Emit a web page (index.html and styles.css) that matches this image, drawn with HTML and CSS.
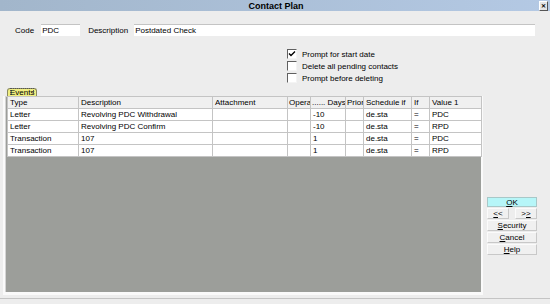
FILE: index.html
```html
<!DOCTYPE html>
<html lang="en">
<head>
    <meta charset="UTF-8">
    <title>Contact Plan</title>
    <link rel="stylesheet" href="styles.css">
</head>
<body>
    <div class="window">
        <div class="titlebar">
            <span class="title">Contact Plan</span>
            <span class="close-btn">&#x2715;</span>
        </div>

        <div class="fields">
            <label class="lbl-code">Code</label>
            <input class="input-code" type="text" value="PDC" readonly>
            <label class="lbl-desc">Description</label>
            <input class="input-desc" type="text" value="Postdated Check" readonly>
        </div>

        <div class="checks">
            <div class="check-row">
                <span class="box">
                    <svg width="8" height="8" viewBox="0 0 8 8"><path d="M1 3.5 L3 5.5 L7 1.5" fill="none" stroke="#000" stroke-width="1.4"/></svg>
                </span>
                Prompt for start date
            </div>
            <div class="check-row"><span class="box"></span>Delete all pending contacts</div>
            <div class="check-row"><span class="box"></span>Prompt before deleting</div>
        </div>

        <div class="tabs">
            <span class="tab"><span class="tab-label">Events</span></span>
        </div>

        <div class="main">
            <div class="grid-frame">
                <table class="events">
                    <thead>
                        <tr>
                            <th class="c-type">Type</th>
                            <th class="c-desc">Description</th>
                            <th class="c-att">Attachment</th>
                            <th class="c-op">Opera</th>
                            <th class="c-days">...... Days</th>
                            <th class="c-prior">Prior</th>
                            <th class="c-sched">Schedule if</th>
                            <th class="c-if">If</th>
                            <th class="c-val">Value 1</th>
                        </tr>
                    </thead>
                    <tbody>
                        <tr>
                            <td>Letter</td><td>Revolving PDC Withdrawal</td><td></td><td></td>
                            <td>-10</td><td></td><td>de.sta</td><td>=</td><td>PDC</td>
                        </tr>
                        <tr>
                            <td>Letter</td><td>Revolving PDC Confirm</td><td></td><td></td>
                            <td>-10</td><td></td><td>de.sta</td><td>=</td><td>RPD</td>
                        </tr>
                        <tr>
                            <td>Transaction</td><td>107</td><td></td><td></td>
                            <td>1</td><td></td><td>de.sta</td><td>=</td><td>PDC</td>
                        </tr>
                        <tr>
                            <td>Transaction</td><td>107</td><td></td><td></td>
                            <td>1</td><td></td><td>de.sta</td><td>=</td><td>RPD</td>
                        </tr>
                    </tbody>
                </table>
            </div>

            <div class="buttons">
                <button class="btn btn-ok"><u>O</u>K</button>
                <div class="btn-pair">
                    <button class="btn btn-small"><u>&lt;</u>&lt;</button>
                    <button class="btn btn-small">&gt;<u>&gt;</u></button>
                </div>
                <button class="btn"><u>S</u>ecurity</button>
                <button class="btn"><u>C</u>ancel</button>
                <button class="btn"><u>H</u>elp</button>
            </div>
        </div>

        <div class="bottom-line"></div>
    </div>
</body>
</html>
```

FILE: styles.css
```css
body {
    margin: 0;
    font-family: "Liberation Sans", Arial, sans-serif;
    font-size: 8px;
    color: #000;
    background-color: #ededed;
}

.window {
    width: 550px;
    height: 304px;
    overflow: hidden;
    background-color: #ededed;
}

.titlebar {
    height: 11px;
    display: flex;
    align-items: center;
    justify-content: center;
    position: relative;
    background: linear-gradient(to right, #a2b6cb, #b4c9e4);
}

.title {
    font-weight: bold;
    font-size: 9px;
    margin-left: 2px;
}

.close-btn {
    position: absolute;
    right: 2px;
    top: 1px;
    width: 7px;
    height: 8px;
    font-size: 6px;
    font-weight: bold;
    line-height: 8px;
    text-align: center;
    background-color: #e4e4e4;
    border: 1px solid #555;
    border-top-color: #fff;
    border-left-color: #fff;
}

.fields {
    display: flex;
    align-items: center;
    margin-top: 13px;
    padding-left: 15px;
    height: 12px;
}

input {
    font-family: inherit;
    font-size: 8px;
    height: 12px;
    box-sizing: border-box;
    padding: 0 1px;
    margin: 0;
    background: #fff;
    border: none;
    border-top: 1px solid #c4c4c4;
    outline: none;
}

.input-code {
    margin-left: 7px;
    width: 39px;
}

.lbl-desc {
    margin-left: 8px;
}

.input-desc {
    margin-left: 6px;
    width: 401px;
}

.checks {
    margin-top: 12px;
    margin-left: 287px;
}

.check-row {
    display: flex;
    align-items: center;
    height: 12px;
}

.box {
    width: 8px;
    height: 8px;
    margin-right: 5px;
    background: #fff;
    border: 1px solid #f4f4f4;
    border-top-color: #606060;
    border-left-color: #606060;
    display: flex;
    align-items: center;
    justify-content: center;
}

.tabs {
    margin-top: 4px;
    padding-left: 7px;
    height: 8px;
}

.tab {
    display: inline-block;
    height: 8px;
    background-color: #f0ee80;
    border: 1px solid #8a8a60;
    border-bottom: none;
    border-radius: 3px 3px 0 0;
    line-height: 8px;
    box-sizing: border-box;
    padding: 0 2px;
}

.tab-label {
    outline: 1px dotted #555;
    outline-offset: -1px;
}

.main {
    display: flex;
    align-items: flex-start;
}

.grid-frame {
    margin-left: 3px;
    width: 480px;
    height: 199px;
    background-color: #9c9e9a;
    border: 1px solid #fafafa;
    border-width: 0 2px 3px 2px;
    box-shadow: inset 1px 1px 0 #d4d4d4;
    padding-left: 1px;
    box-sizing: border-box;
}

.events {
    border-collapse: collapse;
    table-layout: fixed;
    width: 474px;
    margin-left: 1px;
}

.events th,
.events td {
    height: 12px;
    padding: 0 2px;
    line-height: 11px;
    border: 1px solid #c4c4c4;
    text-align: left;
    font-weight: normal;
    white-space: nowrap;
    overflow: hidden;
    box-sizing: border-box;
}

.events th {
    background-color: #f0f0f0;
}

.events td {
    background-color: #fff;
}

.c-type { width: 71px; }
.c-desc { width: 134px; }
.c-att { width: 75px; }
.c-op { width: 23px; }
.c-days { width: 35px; }
.c-prior { width: 18px; }
.c-sched { width: 48px; }
.c-if { width: 18px; }
.c-val { width: 52px; }

.events th.c-op,
.events th.c-prior,
.events th.c-days {
    padding: 0 1px;
}

.buttons {
    margin-left: 4px;
    margin-top: 101px;
    width: 50px;
    display: flex;
    flex-direction: column;
    gap: 1px;
}

.btn {
    font-family: inherit;
    font-size: 8px;
    height: 11px;
    padding: 0;
    margin: 0;
    line-height: 9px;
    background-color: #f0f0f0;
    border: 1px solid #c8c8c8;
    border-top-color: #fbfbfb;
    border-left-color: #fbfbfb;
    color: #000;
    box-sizing: border-box;
    cursor: pointer;
}

.btn-ok {
    background-color: #b6f6f8;
    border-color: #a8c8c8;
    height: 10px;
}

.btn-pair {
    display: flex;
    justify-content: space-between;
}

.btn-small {
    width: 22px;
}

.bottom-line {
    margin-top: 3px;
    height: 1px;
    background-color: #c4c4c4;
}
```
